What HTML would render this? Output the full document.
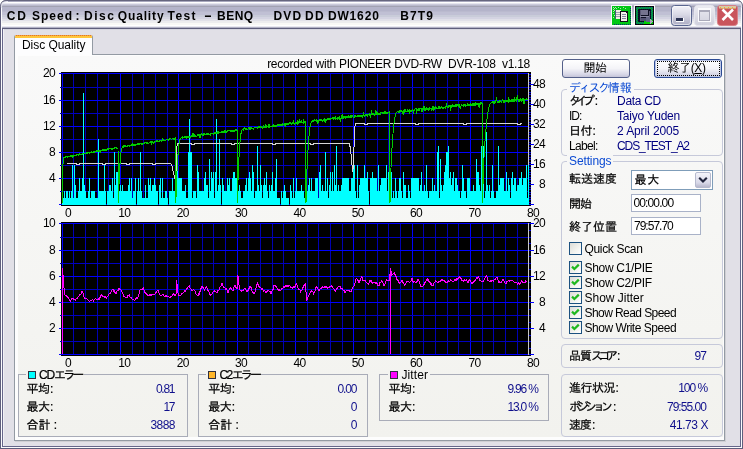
<!DOCTYPE html>
<html lang="ja">
<head>
<meta charset="utf-8">
<title>CD Speed : Disc Quality Test</title>
<style>
html,body{margin:0;padding:0;}
body{width:743px;height:449px;position:relative;overflow:hidden;background:#fff;
 font-family:"Liberation Sans","IPAGothic","Noto Sans CJK JP",sans-serif;font-size:12px;color:#000;}
.abs,#win *{position:absolute;box-sizing:border-box;}
#win{will-change:transform;position:absolute;left:0;top:0;width:743px;height:449px;background:#e1e0e7;overflow:hidden;}
#titlebar{left:0;top:0;width:743px;height:30px;
 background:linear-gradient(to bottom,
 #66667f 0px,#66667f 1px,
 #a8a8be 1px,#a8a8be 2px,
 #ffffff 2px,#ffffff 3px,
 #e6e6ef 3px,#e6e6ef 4px,
 #cacada 4px,#cacada 5px,
 #b9b9cd 5px,#b9b9cd 6px,
 #a2a2b2 6px,#a2a2b2 7px,
 #b4b4ca 7px,#b4b4ca 11px,
 #babace 11px,#babace 12px,
 #c0c0d4 12px,#c0c0d4 15px,
 #c9ccd9 15px,#c9ccd9 17px,
 #d4d4e2 17px,#d4d4e2 19px,
 #e0e0e8 19px,#e0e0e8 21px,
 #ececee 21px,#ececee 23px,
 #f8f8f6 23px,#f8f8f6 25px,
 #ffffff 25px,#ffffff 26px,
 #e8e8f0 26px,#e8e8f0 27px,
 #b0b0c4 27px,#b0b0c4 28px,
 #5e5e7c 28px,#5e5e7c 29px,
 #d4d4de 29px,#d4d4de 30px);}
#title{left:7px;top:6px;width:500px;height:20px;line-height:20px;font-weight:bold;font-size:12px;letter-spacing:0.9px;white-space:pre;color:#000;}
.fr{background:#5e5e7c;}
.t{white-space:nowrap;line-height:14px;height:14px;}
.cj{-webkit-text-stroke:0.22px currentColor;}
.ax{font-size:12px;letter-spacing:-0.7px;line-height:12px;height:12px;white-space:nowrap;}
.axr{text-align:right;width:30px;}
.nv{color:#000080;}
.val{color:#10108c;text-align:right;}
.grp{border:1px solid #c6c9da;border-radius:4px;}
.leg{background:#f7f7f5;color:#0b4ad3;padding:0 2px;-webkit-text-stroke:0 !important;}
.sgrp{border:1px solid #a9acb8;}
.btn{border:1px solid #54608a;border-radius:3px;background:linear-gradient(#ffffff,#f4f4f8 50%,#d6d6e6 85%,#c4c4d8);text-align:center;line-height:17px;font-size:12px;}
.edit{border:1px solid #a9b2c8;background:#fff;line-height:16px;padding-left:2px;letter-spacing:-0.6px}
.cb{width:13px;height:13px;border:1px solid #1c5180;background:linear-gradient(135deg,#dcdcd7,#f3f3ef 60%,#ffffff);}
</style>
</head>
<body>
<div id="win">
<div id="titlebar"></div>
<div id="title"><span style="left:-0.3px;top:0;letter-spacing:1.9px">CD </span><span style="left:25.0px;top:0;letter-spacing:1.0px">Speed </span><span style="left:68.5px;top:0;letter-spacing:0.9px">: </span><span style="left:77.0px;top:0;letter-spacing:1.5px">Disc </span><span style="left:110.8px;top:0;letter-spacing:0.85px">Quality </span><span style="left:160.6px;top:0;letter-spacing:1.4px">Test </span><span style="left:196.6px;top:0;letter-spacing:0.9px;transform:scaleX(2.0);transform-origin:0 50%">- </span><span style="left:210.0px;top:0;letter-spacing:0.5px">BENQ   </span><span style="left:266.4px;top:0;letter-spacing:1.2px">DVD </span><span style="left:298.0px;top:0;letter-spacing:1.3px">DD </span><span style="left:320.9px;top:0;letter-spacing:0.85px">DW1620   </span><span style="left:393.2px;top:0;letter-spacing:1.1px">B7T9</span></div>
<div class="fr" style="left:0;top:7px;width:1px;height:442px"></div>
<div style="left:1px;top:7px;width:1px;height:441px;background:#fbfbfd"></div>
<div class="fr" style="left:2px;top:29px;width:1px;height:418px;background:#66668a"></div>
<div style="left:3px;top:29px;width:1px;height:417px;background:#f0f0f5"></div>
<div class="fr" style="left:742px;top:7px;width:1px;height:442px"></div>
<div style="left:741px;top:7px;width:1px;height:441px;background:#fbfbfd"></div>
<div class="fr" style="left:740px;top:29px;width:1px;height:418px;background:#66668a"></div>
<div class="fr" style="left:0;top:448px;width:743px;height:1px"></div>
<div style="left:1px;top:447px;width:741px;height:1px;background:#fbfbfd"></div>
<div class="fr" style="left:2px;top:446px;width:739px;height:1px;background:#66668a"></div>
<svg width="8" height="8" viewBox="0 0 8 8" style="left:0;top:0"><path d="M0 0H7Q0 0 0 7z" fill="#fff"/><path d="M0.5 8V6.5Q0.5 0.5 6.5 0.5H8" fill="none" stroke="#66667f" stroke-width="1"/><path d="M1.5 8V7Q1.5 1.8 7 1.6H8" fill="none" stroke="#e6e6f0" stroke-width="1"/></svg>
<svg width="8" height="8" viewBox="0 0 8 8" style="left:735px;top:0"><g transform="translate(8,0) scale(-1,1)"><path d="M0 0H7Q0 0 0 7z" fill="#fff"/><path d="M0.5 8V6.5Q0.5 0.5 6.5 0.5H8" fill="none" stroke="#66667f" stroke-width="1"/><path d="M1.5 8V7Q1.5 1.8 7 1.6H8" fill="none" stroke="#e6e6f0" stroke-width="1"/></g></svg>

<svg width="140" height="30" viewBox="603 0 140 30" style="left:603px;top:0">
<defs>
<pattern id="chk" width="2" height="2" patternUnits="userSpaceOnUse"><rect width="2" height="2" fill="#0a3c96"/><rect width="1" height="1" fill="#00dc00"/><rect x="1" y="1" width="1" height="1" fill="#00dc00"/></pattern>
<pattern id="dotn" width="2" height="2" patternUnits="userSpaceOnUse"><rect width="2" height="2" fill="#00c814"/><rect width="1" height="1" fill="#0a2878"/></pattern>
<linearGradient id="gmin" x1="0" y1="0" x2="0" y2="1"><stop offset="0" stop-color="#f4f4fa"/><stop offset="0.45" stop-color="#d9d9e6"/><stop offset="1" stop-color="#a9a9c1"/></linearGradient>
<linearGradient id="gmax" x1="0" y1="0" x2="0" y2="1"><stop offset="0" stop-color="#ececf2"/><stop offset="1" stop-color="#cfcfdc"/></linearGradient>
</defs>
<g shape-rendering="crispEdges">
<rect x="611" y="5" width="21" height="21" fill="#fff" opacity="0.9"/>
<rect x="612" y="6" width="19" height="19" fill="#00c814"/>
<rect x="630" y="8" width="1" height="17" fill="url(#dotn)"/>
<rect x="613" y="24" width="18" height="1" fill="url(#dotn)"/>
<rect x="613" y="7" width="1" height="1" fill="#b4dcb4"/>
<rect x="614" y="8" width="1" height="1" fill="#b4dcb4"/>
<rect x="613" y="9" width="1" height="1" fill="#b4dcb4"/>
<rect x="615" y="7" width="1" height="1" fill="#b4dcb4"/>
<rect x="614" y="10" width="1" height="1" fill="#b4dcb4"/>
<rect x="613" y="11" width="1" height="1" fill="#b4dcb4"/>
<rect x="616" y="8" width="1" height="1" fill="#b4dcb4"/>
<rect x="613" y="13" width="1" height="1" fill="#b4dcb4"/>
<rect x="618" y="7" width="1" height="1" fill="#b4dcb4"/>
<rect x="620" y="8" width="1" height="1" fill="#b4dcb4"/>
<rect x="623" y="7" width="1" height="1" fill="#b4dcb4"/>
<rect x="625" y="8" width="1" height="1" fill="#b4dcb4"/>
<rect x="614" y="15" width="1" height="1" fill="#b4dcb4"/>
<rect x="613" y="17" width="1" height="1" fill="#b4dcb4"/>
<rect x="615" y="10" width="6" height="9" fill="#f2f0e0"/>
<rect x="615" y="10" width="1" height="9" fill="#4a5a78"/>
<rect x="616" y="12" width="4" height="1" fill="#9aa0b0"/>
<rect x="616" y="14" width="4" height="1" fill="#9aa0b0"/>
<rect x="616" y="16" width="4" height="1" fill="#9aa0b0"/>
<rect x="620" y="11" width="8" height="11" fill="#101018"/>
<rect x="621" y="12" width="6" height="9" fill="#f4f2ea"/>
<rect x="626" y="12" width="1" height="1" fill="#101018"/>
<rect x="622" y="14" width="4" height="1" fill="#8088a0"/>
<rect x="622" y="16" width="4" height="1" fill="#8088a0"/>
<rect x="622" y="18" width="4" height="1" fill="#8088a0"/>
</g>
<g shape-rendering="crispEdges">
<rect x="634" y="5" width="21" height="21" fill="#fff" opacity="0.9"/>
<rect x="635" y="6" width="19" height="19" fill="#08080c"/>
<rect x="636" y="7" width="17" height="17" fill="url(#chk)"/>
<rect x="638" y="9" width="13" height="13" fill="#0c1024"/>
<rect x="644" y="21" width="9" height="3" fill="#00d000"/>
<rect x="640" y="10" width="1" height="11" fill="#5c5c78"/>
<rect x="641" y="10" width="7" height="5" fill="#74748f"/>
<rect x="640" y="16" width="10" height="1" fill="#8a8aa4"/>
<rect x="649" y="11" width="1" height="9" fill="#5c5c78"/>
<rect x="641" y="18" width="5" height="3" fill="#505070"/>
<rect x="646" y="17" width="4" height="5" fill="#606484"/>
<path d="M650 19 l3 2.5 l-3 2.5z" fill="#a8a8b8"/>
</g>
<rect x="671.5" y="5.5" width="20" height="20" rx="3" fill="url(#gmin)" stroke="#5a6690" stroke-width="1"/>
<rect x="672.5" y="6.5" width="18" height="18" rx="2.5" fill="none" stroke="#ffffff" stroke-opacity="0.55"/>
<rect x="675.5" y="17.5" width="8" height="4" fill="#fff" shape-rendering="crispEdges"/>
<rect x="676" y="18" width="7" height="3" fill="#2c3454" shape-rendering="crispEdges"/>
<rect x="694.5" y="5.5" width="20" height="20" rx="3" fill="url(#gmax)" stroke="#e6e6ee" stroke-width="1"/>
<rect x="699" y="9.5" width="11" height="11.5" fill="none" stroke="#fbfbfd" stroke-width="2.4" shape-rendering="crispEdges"/>
<rect x="699.5" y="10.5" width="10" height="10" fill="none" stroke="#a9a9b9" stroke-width="1" shape-rendering="crispEdges"/>
<rect x="699" y="10" width="11" height="2" fill="#a9a9b9" shape-rendering="crispEdges"/>
<rect x="717.5" y="5.5" width="20" height="20" rx="3" fill="#c9545c" stroke="#d88088" stroke-width="1"/>
<rect x="719" y="6" width="17" height="2.5" fill="#d8c8a4"/>
<path d="M722.5 9.5 L733 20 M733 9.5 L722.5 20" stroke="#fff" stroke-width="2.6" stroke-linecap="butt"/>
<rect x="720" y="7" width="1" height="1" fill="#f0b428"/>
<rect x="722" y="8" width="1" height="1" fill="#f0b428"/>
<rect x="724" y="7" width="1" height="1" fill="#f0b428"/>
<rect x="726" y="8" width="1" height="1" fill="#f0b428"/>
<rect x="728" y="7" width="1" height="1" fill="#f0b428"/>
<rect x="730" y="8" width="1" height="1" fill="#f0b428"/>
<rect x="732" y="7" width="1" height="1" fill="#f0b428"/>
<rect x="734" y="8" width="1" height="1" fill="#f0b428"/>
</svg>
<div id="panel" style="left:14px;top:54px;width:711px;height:387px;border:1px solid #939aa3;background:#fdfdfd;box-shadow:1px 1px 0 #cfcfd3"></div>
<div id="page" style="left:18px;top:56px;width:705px;height:381px;background:linear-gradient(to bottom,#f9f9f9 0%,#f6f6f4 45%,#f2f2ee 100%)"></div>
<div id="tabhead" style="left:14px;top:35px;width:79px;height:20px;background:#fdfdfe;border-left:1px solid #939aa3;border-right:1px solid #939aa3;border-radius:2px 2px 0 0;overflow:hidden">
 <div style="left:-1px;top:0;width:79px;height:1px;background:repeating-linear-gradient(to right,#e2772a 0,#e2772a 1px,#f6a73a 1px,#f6a73a 2px)"></div>
 <div style="left:-1px;top:1px;width:79px;height:2px;background:#ffc73c"></div>
</div>
<div class="t" style="left:22px;top:38px;font-size:12px;letter-spacing:-0.05px">Disc Quality</div>

<svg id="charts" width="743" height="449" viewBox="0 0 743 449" style="position:absolute;left:0;top:0" shape-rendering="crispEdges">
<rect x="61" y="72" width="470" height="134" fill="#000"/>
<rect x="62" y="73" width="1" height="132" fill="#0000ff"/>
<rect x="73" y="73" width="1" height="132" fill="#0000b4"/>
<rect x="85" y="73" width="1" height="132" fill="#0000b4"/>
<rect x="97" y="73" width="1" height="132" fill="#0000b4"/>
<rect x="108" y="73" width="1" height="132" fill="#0000b4"/>
<rect x="120" y="73" width="1" height="132" fill="#0000ff"/>
<rect x="132" y="73" width="1" height="132" fill="#0000b4"/>
<rect x="143" y="73" width="1" height="132" fill="#0000b4"/>
<rect x="155" y="73" width="1" height="132" fill="#0000b4"/>
<rect x="167" y="73" width="1" height="132" fill="#0000b4"/>
<rect x="178" y="73" width="1" height="132" fill="#0000ff"/>
<rect x="190" y="73" width="1" height="132" fill="#0000b4"/>
<rect x="202" y="73" width="1" height="132" fill="#0000b4"/>
<rect x="213" y="73" width="1" height="132" fill="#0000b4"/>
<rect x="225" y="73" width="1" height="132" fill="#0000b4"/>
<rect x="237" y="73" width="1" height="132" fill="#0000ff"/>
<rect x="248" y="73" width="1" height="132" fill="#0000b4"/>
<rect x="260" y="73" width="1" height="132" fill="#0000b4"/>
<rect x="272" y="73" width="1" height="132" fill="#0000b4"/>
<rect x="283" y="73" width="1" height="132" fill="#0000b4"/>
<rect x="295" y="73" width="1" height="132" fill="#0000ff"/>
<rect x="307" y="73" width="1" height="132" fill="#0000b4"/>
<rect x="318" y="73" width="1" height="132" fill="#0000b4"/>
<rect x="330" y="73" width="1" height="132" fill="#0000b4"/>
<rect x="342" y="73" width="1" height="132" fill="#0000b4"/>
<rect x="353" y="73" width="1" height="132" fill="#0000ff"/>
<rect x="365" y="73" width="1" height="132" fill="#0000b4"/>
<rect x="377" y="73" width="1" height="132" fill="#0000b4"/>
<rect x="388" y="73" width="1" height="132" fill="#0000b4"/>
<rect x="400" y="73" width="1" height="132" fill="#0000b4"/>
<rect x="412" y="73" width="1" height="132" fill="#0000ff"/>
<rect x="423" y="73" width="1" height="132" fill="#0000b4"/>
<rect x="435" y="73" width="1" height="132" fill="#0000b4"/>
<rect x="447" y="73" width="1" height="132" fill="#0000b4"/>
<rect x="458" y="73" width="1" height="132" fill="#0000b4"/>
<rect x="470" y="73" width="1" height="132" fill="#0000ff"/>
<rect x="482" y="73" width="1" height="132" fill="#0000b4"/>
<rect x="493" y="73" width="1" height="132" fill="#0000b4"/>
<rect x="505" y="73" width="1" height="132" fill="#0000b4"/>
<rect x="517" y="73" width="1" height="132" fill="#0000b4"/>
<rect x="59" y="204" width="470" height="1" fill="#0000ff"/>
<rect x="60" y="191" width="469" height="1" fill="#0000c0"/>
<rect x="59" y="178" width="470" height="1" fill="#0000ff"/>
<rect x="60" y="165" width="469" height="1" fill="#0000c0"/>
<rect x="59" y="152" width="470" height="1" fill="#0000ff"/>
<rect x="60" y="139" width="469" height="1" fill="#0000c0"/>
<rect x="59" y="126" width="470" height="1" fill="#0000ff"/>
<rect x="60" y="113" width="469" height="1" fill="#0000c0"/>
<rect x="59" y="100" width="470" height="1" fill="#0000ff"/>
<rect x="60" y="87" width="469" height="1" fill="#0000c0"/>
<rect x="59" y="73" width="470" height="1" fill="#0000ff"/>
<rect x="528" y="73" width="1" height="132" fill="#c8c8c8"/>
<rect x="529" y="204" width="5" height="1" fill="#0000ff"/>
<rect x="529" y="202" width="2" height="1" fill="#0000e0"/>
<rect x="529" y="199" width="2" height="1" fill="#0000e0"/>
<rect x="529" y="197" width="2" height="1" fill="#0000e0"/>
<rect x="529" y="194" width="2" height="1" fill="#0000e0"/>
<rect x="529" y="192" width="2" height="1" fill="#0000e0"/>
<rect x="529" y="189" width="2" height="1" fill="#0000e0"/>
<rect x="529" y="187" width="2" height="1" fill="#0000e0"/>
<rect x="529" y="184" width="5" height="1" fill="#0000ff"/>
<rect x="529" y="182" width="2" height="1" fill="#0000e0"/>
<rect x="529" y="179" width="2" height="1" fill="#0000e0"/>
<rect x="529" y="177" width="2" height="1" fill="#0000e0"/>
<rect x="529" y="174" width="2" height="1" fill="#0000e0"/>
<rect x="529" y="172" width="2" height="1" fill="#0000e0"/>
<rect x="529" y="169" width="2" height="1" fill="#0000e0"/>
<rect x="529" y="167" width="2" height="1" fill="#0000e0"/>
<rect x="529" y="164" width="5" height="1" fill="#0000ff"/>
<rect x="529" y="162" width="2" height="1" fill="#0000e0"/>
<rect x="529" y="159" width="2" height="1" fill="#0000e0"/>
<rect x="529" y="157" width="2" height="1" fill="#0000e0"/>
<rect x="529" y="154" width="2" height="1" fill="#0000e0"/>
<rect x="529" y="152" width="2" height="1" fill="#0000e0"/>
<rect x="529" y="149" width="2" height="1" fill="#0000e0"/>
<rect x="529" y="147" width="2" height="1" fill="#0000e0"/>
<rect x="529" y="144" width="5" height="1" fill="#0000ff"/>
<rect x="529" y="142" width="2" height="1" fill="#0000e0"/>
<rect x="529" y="139" width="2" height="1" fill="#0000e0"/>
<rect x="529" y="137" width="2" height="1" fill="#0000e0"/>
<rect x="529" y="134" width="2" height="1" fill="#0000e0"/>
<rect x="529" y="132" width="2" height="1" fill="#0000e0"/>
<rect x="529" y="129" width="2" height="1" fill="#0000e0"/>
<rect x="529" y="127" width="2" height="1" fill="#0000e0"/>
<rect x="529" y="124" width="5" height="1" fill="#0000ff"/>
<rect x="529" y="122" width="2" height="1" fill="#0000e0"/>
<rect x="529" y="119" width="2" height="1" fill="#0000e0"/>
<rect x="529" y="117" width="2" height="1" fill="#0000e0"/>
<rect x="529" y="114" width="2" height="1" fill="#0000e0"/>
<rect x="529" y="112" width="2" height="1" fill="#0000e0"/>
<rect x="529" y="109" width="2" height="1" fill="#0000e0"/>
<rect x="529" y="107" width="2" height="1" fill="#0000e0"/>
<rect x="529" y="104" width="5" height="1" fill="#0000ff"/>
<rect x="529" y="102" width="2" height="1" fill="#0000e0"/>
<rect x="529" y="99" width="2" height="1" fill="#0000e0"/>
<rect x="529" y="97" width="2" height="1" fill="#0000e0"/>
<rect x="529" y="94" width="2" height="1" fill="#0000e0"/>
<rect x="529" y="92" width="2" height="1" fill="#0000e0"/>
<rect x="529" y="89" width="2" height="1" fill="#0000e0"/>
<rect x="529" y="87" width="2" height="1" fill="#0000e0"/>
<rect x="529" y="84" width="5" height="1" fill="#0000ff"/>
<rect x="529" y="82" width="2" height="1" fill="#0000e0"/>
<rect x="529" y="79" width="2" height="1" fill="#0000e0"/>
<rect x="529" y="77" width="2" height="1" fill="#0000e0"/>
<rect x="529" y="74" width="2" height="1" fill="#0000e0"/>
<path d="M62 191h1V205h-1zM63 198h1V205h-1zM64 191h1V205h-1zM65 198h1V205h-1zM66 191h1V205h-1zM67 191h1V205h-1zM68 198h1V205h-1zM69 191h1V205h-1zM70 198h1V205h-1zM71 191h1V205h-1zM72 165h1V205h-1zM73 198h1V205h-1zM74 165h1V205h-1zM75 185h1V205h-1zM76 198h1V205h-1zM77 198h1V205h-1zM78 191h1V205h-1zM79 178h1V205h-1zM80 191h1V205h-1zM81 191h1V205h-1zM82 178h1V205h-1zM83 93h1V205h-1zM84 185h1V205h-1zM85 191h1V205h-1zM86 198h1V205h-1zM87 198h1V205h-1zM88 191h1V205h-1zM89 178h1V205h-1zM90 198h1V205h-1zM91 191h1V205h-1zM92 191h1V205h-1zM93 191h1V205h-1zM94 191h1V205h-1zM95 198h1V205h-1zM96 198h1V205h-1zM97 198h1V205h-1zM98 139h1V205h-1zM99 191h1V205h-1zM100 191h1V205h-1zM101 191h1V205h-1zM102 191h1V205h-1zM103 191h1V205h-1zM104 165h1V205h-1zM105 191h1V205h-1zM107 191h1V205h-1zM108 191h1V205h-1zM109 185h1V205h-1zM110 185h1V205h-1zM111 191h1V205h-1zM112 178h1V205h-1zM113 198h1V205h-1zM114 152h1V205h-1zM115 185h1V205h-1zM116 172h1V205h-1zM117 172h1V205h-1zM118 198h1V205h-1zM119 191h1V205h-1zM120 185h1V205h-1zM121 191h1V205h-1zM122 185h1V205h-1zM123 191h1V205h-1zM124 191h1V205h-1zM125 191h1V205h-1zM126 191h1V205h-1zM127 191h1V205h-1zM128 185h1V205h-1zM129 178h1V205h-1zM130 191h1V205h-1zM131 178h1V205h-1zM132 198h1V205h-1zM133 191h1V205h-1zM134 191h1V205h-1zM135 178h1V205h-1zM137 191h1V205h-1zM138 178h1V205h-1zM139 191h1V205h-1zM140 152h1V205h-1zM141 191h1V205h-1zM142 198h1V205h-1zM143 198h1V205h-1zM144 198h1V205h-1zM145 185h1V205h-1zM146 198h1V205h-1zM147 198h1V205h-1zM148 178h1V205h-1zM149 185h1V205h-1zM150 178h1V205h-1zM151 191h1V205h-1zM152 185h1V205h-1zM153 185h1V205h-1zM154 178h1V205h-1zM155 185h1V205h-1zM156 191h1V205h-1zM157 191h1V205h-1zM159 185h1V205h-1zM160 178h1V205h-1zM161 198h1V205h-1zM162 178h1V205h-1zM163 198h1V205h-1zM164 198h1V205h-1zM165 191h1V205h-1zM166 191h1V205h-1zM167 198h1V205h-1zM169 191h1V205h-1zM170 191h1V205h-1zM171 191h1V205h-1zM172 178h1V205h-1zM173 191h1V205h-1zM174 191h1V205h-1zM175 152h1V205h-1zM176 152h1V205h-1zM177 165h1V205h-1zM178 178h1V205h-1zM179 178h1V205h-1zM180 178h1V205h-1zM181 178h1V205h-1zM182 191h1V205h-1zM183 191h1V205h-1zM184 191h1V205h-1zM185 185h1V205h-1zM186 198h1V205h-1zM187 198h1V205h-1zM188 152h1V205h-1zM189 119h1V205h-1zM190 152h1V205h-1zM191 152h1V205h-1zM192 198h1V205h-1zM193 191h1V205h-1zM194 191h1V205h-1zM195 191h1V205h-1zM196 198h1V205h-1zM197 165h1V205h-1zM198 172h1V205h-1zM199 191h1V205h-1zM200 191h1V205h-1zM201 191h1V205h-1zM202 191h1V205h-1zM203 191h1V205h-1zM204 178h1V205h-1zM205 172h1V205h-1zM206 185h1V205h-1zM207 185h1V205h-1zM208 198h1V205h-1zM209 159h1V205h-1zM210 191h1V205h-1zM211 172h1V205h-1zM212 178h1V205h-1zM213 172h1V205h-1zM214 198h1V205h-1zM215 172h1V205h-1zM216 119h1V205h-1zM217 191h1V205h-1zM218 185h1V205h-1zM219 139h1V205h-1zM220 185h1V205h-1zM222 178h1V205h-1zM223 185h1V205h-1zM224 191h1V205h-1zM225 191h1V205h-1zM226 191h1V205h-1zM227 178h1V205h-1zM228 185h1V205h-1zM229 178h1V205h-1zM230 191h1V205h-1zM231 191h1V205h-1zM232 178h1V205h-1zM233 172h1V205h-1zM234 172h1V205h-1zM235 178h1V205h-1zM236 178h1V205h-1zM237 159h1V205h-1zM238 191h1V205h-1zM239 185h1V205h-1zM240 191h1V205h-1zM241 198h1V205h-1zM242 198h1V205h-1zM243 191h1V205h-1zM244 191h1V205h-1zM245 185h1V205h-1zM246 178h1V205h-1zM247 191h1V205h-1zM248 178h1V205h-1zM249 172h1V205h-1zM250 178h1V205h-1zM251 191h1V205h-1zM252 165h1V205h-1zM253 172h1V205h-1zM254 198h1V205h-1zM255 191h1V205h-1zM256 191h1V205h-1zM257 146h1V205h-1zM258 185h1V205h-1zM259 191h1V205h-1zM260 165h1V205h-1zM261 185h1V205h-1zM262 198h1V205h-1zM263 185h1V205h-1zM264 178h1V205h-1zM265 185h1V205h-1zM266 172h1V205h-1zM267 191h1V205h-1zM268 198h1V205h-1zM269 185h1V205h-1zM270 191h1V205h-1zM271 185h1V205h-1zM272 172h1V205h-1zM273 191h1V205h-1zM274 191h1V205h-1zM275 178h1V205h-1zM276 159h1V205h-1zM277 198h1V205h-1zM278 198h1V205h-1zM279 198h1V205h-1zM281 191h1V205h-1zM282 198h1V205h-1zM283 191h1V205h-1zM284 185h1V205h-1zM285 191h1V205h-1zM286 198h1V205h-1zM287 198h1V205h-1zM288 198h1V205h-1zM290 185h1V205h-1zM291 191h1V205h-1zM292 198h1V205h-1zM293 178h1V205h-1zM294 198h1V205h-1zM295 191h1V205h-1zM296 178h1V205h-1zM297 191h1V205h-1zM298 191h1V205h-1zM299 191h1V205h-1zM300 191h1V205h-1zM301 185h1V205h-1zM302 191h1V205h-1zM303 191h1V205h-1zM304 198h1V205h-1zM305 178h1V205h-1zM306 191h1V205h-1zM307 191h1V205h-1zM308 185h1V205h-1zM309 178h1V205h-1zM310 191h1V205h-1zM311 178h1V205h-1zM312 191h1V205h-1zM313 191h1V205h-1zM314 191h1V205h-1zM315 178h1V205h-1zM316 178h1V205h-1zM317 178h1V205h-1zM318 198h1V205h-1zM319 172h1V205h-1zM320 165h1V205h-1zM321 191h1V205h-1zM322 185h1V205h-1zM323 191h1V205h-1zM324 191h1V205h-1zM325 152h1V205h-1zM326 191h1V205h-1zM327 178h1V205h-1zM328 198h1V205h-1zM329 185h1V205h-1zM330 172h1V205h-1zM331 191h1V205h-1zM332 172h1V205h-1zM333 191h1V205h-1zM334 165h1V205h-1zM335 185h1V205h-1zM336 146h1V205h-1zM337 191h1V205h-1zM338 185h1V205h-1zM339 191h1V205h-1zM340 191h1V205h-1zM341 185h1V205h-1zM342 178h1V205h-1zM343 178h1V205h-1zM344 178h1V205h-1zM345 178h1V205h-1zM346 178h1V205h-1zM347 178h1V205h-1zM348 178h1V205h-1zM349 191h1V205h-1zM350 191h1V205h-1zM351 178h1V205h-1zM352 178h1V205h-1zM353 165h1V205h-1zM354 165h1V205h-1zM355 191h1V205h-1zM356 198h1V205h-1zM357 165h1V205h-1zM358 198h1V205h-1zM359 185h1V205h-1zM360 178h1V205h-1zM361 178h1V205h-1zM362 178h1V205h-1zM363 178h1V205h-1zM364 165h1V205h-1zM365 178h1V205h-1zM366 178h1V205h-1zM367 172h1V205h-1zM368 191h1V205h-1zM370 178h1V205h-1zM371 178h1V205h-1zM372 172h1V205h-1zM373 178h1V205h-1zM374 178h1V205h-1zM375 178h1V205h-1zM376 178h1V205h-1zM377 191h1V205h-1zM378 165h1V205h-1zM379 191h1V205h-1zM380 185h1V205h-1zM381 178h1V205h-1zM382 178h1V205h-1zM383 178h1V205h-1zM384 178h1V205h-1zM385 178h1V205h-1zM386 165h1V205h-1zM387 191h1V205h-1zM388 172h1V205h-1zM389 172h1V205h-1zM390 178h1V205h-1zM391 172h1V205h-1zM392 198h1V205h-1zM393 191h1V205h-1zM394 198h1V205h-1zM395 178h1V205h-1zM396 191h1V205h-1zM397 198h1V205h-1zM398 191h1V205h-1zM399 178h1V205h-1zM400 178h1V205h-1zM401 191h1V205h-1zM402 198h1V205h-1zM403 172h1V205h-1zM404 185h1V205h-1zM405 185h1V205h-1zM406 198h1V205h-1zM407 198h1V205h-1zM408 185h1V205h-1zM409 191h1V205h-1zM410 198h1V205h-1zM411 178h1V205h-1zM412 178h1V205h-1zM413 178h1V205h-1zM414 178h1V205h-1zM415 178h1V205h-1zM416 178h1V205h-1zM417 178h1V205h-1zM418 178h1V205h-1zM419 191h1V205h-1zM420 185h1V205h-1zM421 172h1V205h-1zM422 191h1V205h-1zM423 191h1V205h-1zM424 185h1V205h-1zM425 191h1V205h-1zM426 165h1V205h-1zM427 191h1V205h-1zM428 198h1V205h-1zM429 191h1V205h-1zM430 191h1V205h-1zM431 191h1V205h-1zM432 178h1V205h-1zM433 191h1V205h-1zM434 185h1V205h-1zM435 191h1V205h-1zM436 191h1V205h-1zM437 152h1V205h-1zM438 146h1V205h-1zM439 198h1V205h-1zM440 159h1V205h-1zM441 185h1V205h-1zM442 191h1V205h-1zM443 185h1V205h-1zM444 172h1V205h-1zM445 165h1V205h-1zM446 152h1V205h-1zM447 152h1V205h-1zM448 146h1V205h-1zM449 178h1V205h-1zM450 172h1V205h-1zM451 185h1V205h-1zM452 178h1V205h-1zM453 172h1V205h-1zM454 191h1V205h-1zM455 178h1V205h-1zM456 178h1V205h-1zM457 185h1V205h-1zM458 191h1V205h-1zM459 191h1V205h-1zM460 198h1V205h-1zM461 191h1V205h-1zM462 165h1V205h-1zM463 178h1V205h-1zM464 191h1V205h-1zM465 191h1V205h-1zM466 198h1V205h-1zM467 178h1V205h-1zM468 178h1V205h-1zM469 178h1V205h-1zM470 191h1V205h-1zM471 191h1V205h-1zM472 191h1V205h-1zM473 185h1V205h-1zM474 191h1V205h-1zM475 191h1V205h-1zM476 159h1V205h-1zM477 172h1V205h-1zM478 172h1V205h-1zM479 185h1V205h-1zM480 191h1V205h-1zM481 146h1V205h-1zM482 146h1V205h-1zM483 146h1V205h-1zM484 198h1V205h-1zM485 191h1V205h-1zM486 132h1V205h-1zM487 185h1V205h-1zM488 191h1V205h-1zM489 185h1V205h-1zM490 198h1V205h-1zM491 191h1V205h-1zM492 165h1V205h-1zM493 191h1V205h-1zM494 198h1V205h-1zM495 198h1V205h-1zM496 191h1V205h-1zM497 191h1V205h-1zM498 146h1V205h-1zM499 185h1V205h-1zM500 178h1V205h-1zM501 178h1V205h-1zM502 178h1V205h-1zM503 178h1V205h-1zM504 191h1V205h-1zM505 191h1V205h-1zM506 172h1V205h-1zM507 191h1V205h-1zM508 178h1V205h-1zM509 185h1V205h-1zM510 198h1V205h-1zM511 178h1V205h-1zM512 172h1V205h-1zM513 185h1V205h-1zM514 178h1V205h-1zM515 178h1V205h-1zM516 191h1V205h-1zM517 185h1V205h-1zM518 185h1V205h-1zM519 178h1V205h-1zM520 178h1V205h-1zM521 172h1V205h-1zM522 185h1V205h-1zM523 178h1V205h-1zM524 178h1V205h-1zM525 178h1V205h-1zM526 165h1V205h-1zM527 198h1V205h-1zM528 165h1V205h-1z" fill="#00ffff"/>
<rect x="61" y="205" width="470" height="1" fill="#000"/>
<g shape-rendering="crispEdges"><polyline points="66.5,163.5 76.0,163.5 77.0,164.5 79.0,164.5 80.0,163.5 102.0,163.5 103.0,164.5 105.0,164.5 106.0,163.5 126.0,163.5 127.0,164.5 129.0,164.5 130.0,163.5 152.0,163.5 153.0,164.5 155.0,164.5 156.0,163.5 170.5,163.5 172.0,166.0 174.0,175.0 175.5,181.0 176.5,170.0 177.0,146.0 178.0,143.5 191.0,143.5 192.0,144.5 194.0,144.5 195.0,143.5 231.0,143.5 232.0,144.5 234.0,144.5 235.0,143.5 272.0,143.5 273.0,144.5 275.0,144.5 276.0,143.5 310.0,143.5 311.0,144.5 313.0,144.5 314.0,143.5 349.0,143.5 350.5,148.0 351.5,160.0 352.8,171.5 353.8,160.0 354.3,130.0 355.5,123.5 364.0,123.5 365.0,124.5 367.0,124.5 368.0,123.5 415.0,123.5 416.0,124.5 418.0,124.5 419.0,123.5 463.0,123.5 464.0,124.5 466.0,124.5 467.0,123.5 517.0,123.5 518.0,124.5 520.0,124.5 521.0,123.5 521.5,123.5" fill="none" stroke="#d6d6d6" stroke-width="1"/><polyline points="62.5,203.0 62.5,170.0 63.5,159.0 64.0,157.4 64.3,157.9 64.7,157.6 65.0,157.6 65.4,156.7 65.7,157.6 66.0,157.2 66.4,156.6 66.7,156.8 67.1,156.7 67.4,156.6 67.7,157.4 68.1,156.6 68.4,156.9 68.8,156.8 69.1,156.1 69.4,156.2 69.8,156.2 70.1,155.8 70.5,156.0 70.8,156.5 71.1,155.9 71.5,156.1 71.8,155.6 72.2,155.6 72.5,157.7 72.8,155.3 73.2,156.4 73.5,155.6 73.9,156.2 74.2,155.1 74.5,155.2 74.9,155.6 75.2,155.1 75.6,155.1 75.9,155.7 76.2,154.7 76.6,155.3 76.9,155.3 77.3,154.8 77.6,154.7 77.9,154.6 78.3,155.3 78.6,154.1 79.0,154.3 79.3,154.4 79.6,154.0 80.0,154.8 80.3,154.1 80.7,154.5 81.0,153.8 81.3,154.1 81.7,154.5 82.0,155.3 82.4,154.5 82.7,154.0 83.0,153.3 83.4,153.7 83.7,153.9 84.1,153.1 84.4,153.1 84.7,153.3 85.1,153.8 85.4,153.1 85.8,153.1 86.1,153.1 86.4,152.8 86.8,153.7 87.1,152.7 87.5,153.7 87.8,152.5 88.1,152.4 88.5,152.3 88.8,152.5 89.2,153.2 89.5,152.5 89.8,152.6 90.2,152.3 90.5,152.2 90.9,151.9 91.2,152.5 91.5,151.9 91.9,151.9 92.2,152.1 92.6,152.6 92.9,152.7 93.2,152.6 93.6,151.3 93.9,152.4 94.3,151.7 94.6,152.1 94.9,151.2 95.3,151.1 95.6,151.8 96.0,152.0 96.3,150.4 96.6,151.0 97.0,151.5 97.3,150.7 97.7,151.3 98.0,150.6 98.3,151.1 98.7,150.8 99.0,152.4 99.4,151.5 99.7,150.5 100.0,150.4 100.4,152.1 100.7,150.9 101.1,149.9 101.4,150.7 101.7,150.1 102.1,151.0 102.4,149.7 102.8,150.1 103.1,149.8 103.4,150.5 103.8,149.7 104.1,149.8 104.5,149.6 104.8,150.3 105.1,150.5 105.5,149.3 105.8,149.6 106.2,150.3 106.5,149.4 106.8,150.2 107.2,148.9 107.5,149.3 107.9,149.9 108.2,150.0 108.5,149.0 108.9,149.8 109.2,148.5 109.6,148.9 109.9,148.8 110.2,148.2 110.6,148.7 110.9,148.3 111.3,148.4 111.6,149.2 111.9,150.0 112.3,148.2 112.6,148.5 113.0,148.8 113.3,148.6 113.6,148.5 114.0,148.1 114.3,148.7 114.7,147.8 115.0,148.3 115.3,147.8 115.7,147.4 116.0,148.2 116.4,147.6 116.7,148.0 117.0,148.4 117.4,148.2 117.7,148.0 118.0,148.0 118.3,202.5 119.3,176.3 119.8,166.7 120.3,159.3 120.8,153.9 121.3,150.3 121.8,148.1 122.3,147.1 122.8,146.8 123.1,147.4 123.5,146.2 123.8,145.9 124.2,146.3 124.5,146.0 124.8,147.0 125.2,146.8 125.5,146.4 125.9,145.8 126.2,146.5 126.5,146.3 126.9,146.0 127.2,145.5 127.6,145.6 127.9,146.7 128.2,145.4 128.6,145.8 128.9,145.4 129.3,146.2 129.6,146.1 129.9,145.3 130.3,145.2 130.6,145.4 131.0,145.1 131.3,146.0 131.6,144.7 132.0,144.9 132.3,145.5 132.7,143.6 133.0,145.1 133.3,145.6 133.7,144.3 134.0,144.4 134.4,145.6 134.7,145.5 135.0,145.4 135.4,144.4 135.7,145.4 136.1,144.8 136.4,144.2 136.7,144.0 137.1,144.1 137.4,144.7 137.8,143.6 138.1,144.6 138.4,144.0 138.8,144.7 139.1,143.5 139.5,143.9 139.8,144.3 140.1,143.5 140.5,143.8 140.8,143.6 141.2,143.6 141.5,143.6 141.8,144.3 142.2,143.5 142.5,144.0 142.9,142.8 143.2,143.4 143.5,143.3 143.9,143.3 144.2,142.6 144.6,143.5 144.9,142.6 145.2,143.0 145.6,142.6 145.9,143.1 146.3,142.4 146.6,143.5 146.9,142.5 147.3,143.6 147.6,142.8 148.0,143.4 148.3,143.4 148.6,143.2 149.0,143.1 149.3,142.4 149.7,143.0 150.0,142.0 150.3,142.4 150.7,141.8 151.0,142.7 151.4,141.5 151.7,144.2 152.0,141.5 152.4,142.2 152.7,141.7 153.1,142.1 153.4,142.2 153.7,143.4 154.1,141.8 154.4,142.0 154.8,142.3 155.1,141.5 155.4,141.4 155.8,142.1 156.1,140.1 156.5,140.8 156.8,141.9 157.1,140.6 157.5,141.1 157.8,140.7 158.2,142.0 158.5,141.7 158.8,141.9 159.2,141.8 159.5,140.5 159.9,141.6 160.2,140.7 160.5,140.3 160.9,140.4 161.2,140.2 161.6,141.4 161.9,140.3 162.2,138.6 162.6,140.4 162.9,140.1 163.3,140.2 163.6,140.0 163.9,139.6 164.3,141.0 164.6,140.3 165.0,140.8 165.3,140.2 165.6,140.5 166.0,139.8 166.3,139.4 166.7,139.2 167.0,140.1 167.3,139.5 167.7,139.5 168.0,140.3 168.4,140.3 168.7,140.0 169.0,139.2 169.4,139.4 169.7,138.7 170.1,137.9 170.4,138.5 170.7,138.7 171.1,138.8 171.4,139.4 171.8,139.4 172.1,138.5 172.4,138.6 172.8,138.4 173.1,139.6 173.5,138.8 173.8,138.1 174.1,138.9 174.5,139.0 174.8,139.5 175.2,138.3 175.5,137.9 175.8,202.5 176.8,174.7 177.3,165.1 177.8,157.2 178.3,150.9 178.8,146.0 179.3,142.5 179.8,140.1 180.3,138.7 180.8,138.0 181.3,137.8 181.6,137.6 182.0,136.9 182.3,136.8 182.7,138.4 183.0,137.0 183.3,137.5 183.7,138.0 184.0,137.1 184.4,136.6 184.7,137.8 185.0,136.4 185.4,137.6 185.7,137.6 186.1,136.6 186.4,138.4 186.7,137.7 187.1,137.7 187.4,136.1 187.8,137.2 188.1,137.5 188.4,136.4 188.8,137.4 189.1,136.7 189.5,137.3 189.8,136.1 190.1,137.3 190.5,136.3 190.8,136.2 191.2,137.1 191.5,136.9 191.8,136.2 192.2,133.6 192.5,136.3 192.9,135.6 193.2,135.4 193.5,133.6 193.9,136.2 194.2,136.8 194.6,135.1 194.9,134.3 195.2,136.2 195.6,135.9 195.9,136.3 196.3,136.4 196.6,136.3 196.9,136.4 197.3,135.0 197.6,134.7 198.0,136.0 198.3,136.0 198.6,135.0 199.0,134.6 199.3,134.7 199.7,136.9 200.0,137.8 200.3,135.8 200.7,135.2 201.0,134.6 201.4,133.6 201.7,134.6 202.0,134.9 202.4,135.5 202.7,135.4 203.1,133.8 203.4,135.2 203.7,133.7 204.1,134.6 204.4,134.0 204.8,134.2 205.1,134.0 205.4,134.0 205.8,134.7 206.1,133.6 206.5,133.5 206.8,134.6 207.1,134.4 207.5,133.9 207.8,134.8 208.2,132.9 208.5,133.6 208.8,134.0 209.2,134.8 209.5,134.7 209.9,134.0 210.2,135.8 210.5,133.7 210.9,133.6 211.2,133.3 211.6,133.9 211.9,133.0 212.2,133.7 212.6,133.4 212.9,133.9 213.3,133.6 213.6,134.2 213.9,133.4 214.3,132.7 214.6,132.7 215.0,134.0 215.3,133.4 215.6,132.4 216.0,132.6 216.3,132.5 216.7,133.6 217.0,133.6 217.3,131.9 217.7,132.6 218.0,133.6 218.4,131.8 218.7,131.1 219.0,133.3 219.4,132.7 219.7,132.3 220.1,132.8 220.4,132.9 220.7,133.0 221.1,132.6 221.4,131.9 221.8,131.4 222.1,132.7 222.4,132.4 222.8,131.9 223.1,132.3 223.5,132.3 223.8,131.3 224.1,132.4 224.5,131.8 224.8,130.9 225.2,131.1 225.5,132.5 225.8,130.9 226.2,131.7 226.5,131.6 226.9,132.2 227.2,131.3 227.5,130.9 227.9,131.2 228.2,130.6 228.6,131.0 228.9,130.8 229.2,130.3 229.6,131.0 229.9,130.8 230.3,130.6 230.6,131.9 230.9,130.5 231.3,130.7 231.6,130.2 232.0,131.5 232.3,130.8 232.6,130.2 233.0,130.4 233.3,131.3 233.7,130.6 234.0,130.7 234.3,131.2 234.7,131.2 235.0,130.2 235.4,130.3 235.7,129.4 236.0,129.9 236.4,129.9 236.7,130.1 237.0,130.5 237.3,202.5 238.3,171.1 238.8,160.2 239.3,151.3 239.8,144.2 240.3,138.7 240.8,134.7 241.3,132.0 241.8,130.4 242.3,129.7 242.8,129.5 243.1,130.3 243.5,128.5 243.8,130.1 244.2,128.6 244.5,127.4 244.8,128.6 245.2,128.7 245.5,129.3 245.9,128.4 246.2,129.6 246.5,128.8 246.9,129.2 247.2,129.8 247.6,129.7 247.9,129.1 248.2,128.8 248.6,127.9 248.9,129.0 249.3,127.9 249.6,129.3 249.9,128.7 250.3,129.3 250.6,128.0 251.0,128.6 251.3,127.7 251.6,128.7 252.0,127.9 252.3,128.1 252.7,128.6 253.0,127.9 253.3,129.3 253.7,128.7 254.0,128.0 254.4,127.3 254.7,127.8 255.0,127.1 255.4,127.5 255.7,127.9 256.1,127.3 256.4,127.2 256.7,127.3 257.1,127.6 257.4,128.6 257.8,127.3 258.1,127.5 258.4,126.9 258.8,126.7 259.1,126.6 259.5,127.2 259.8,127.1 260.1,127.1 260.5,126.3 260.8,127.1 261.2,126.2 261.5,127.2 261.8,126.3 262.2,127.4 262.5,128.3 262.9,127.2 263.2,127.2 263.5,126.7 263.9,125.6 264.2,127.4 264.6,126.2 264.9,126.5 265.2,126.5 265.6,127.5 265.9,124.5 266.3,127.1 266.6,126.9 266.9,125.5 267.3,126.6 267.6,126.7 268.0,126.9 268.3,125.4 268.6,127.1 269.0,123.9 269.3,127.2 269.7,125.5 270.0,126.0 270.3,126.2 270.7,126.5 271.0,125.7 271.4,126.3 271.7,126.4 272.0,125.9 272.4,126.1 272.7,126.6 273.1,124.7 273.4,126.5 273.7,125.9 274.1,125.2 274.4,126.5 274.8,125.7 275.1,126.4 275.4,125.3 275.8,126.3 276.1,126.3 276.5,125.9 276.8,125.8 277.1,124.7 277.5,124.8 277.8,125.4 278.2,125.7 278.5,125.8 278.8,124.0 279.2,125.7 279.5,125.9 279.9,124.6 280.2,125.4 280.5,124.7 280.9,124.4 281.2,124.0 281.6,125.2 281.9,124.2 282.2,125.4 282.6,123.8 282.9,125.1 283.3,125.0 283.6,124.5 283.9,124.3 284.3,125.0 284.6,125.3 285.0,123.3 285.3,124.7 285.6,126.6 286.0,124.0 286.3,124.7 286.7,123.5 287.0,124.9 287.3,124.0 287.7,124.1 288.0,123.2 288.4,124.3 288.7,123.9 289.0,123.8 289.4,122.7 289.7,123.4 290.1,123.9 290.4,122.9 290.7,123.2 291.1,124.8 291.4,123.7 291.8,124.4 292.1,122.5 292.4,123.6 292.8,122.5 293.1,122.9 293.5,120.7 293.8,123.3 294.1,123.1 294.5,124.0 294.8,123.3 295.2,122.2 295.5,122.5 295.8,123.3 296.2,123.3 296.5,122.8 296.9,123.9 297.2,124.5 297.5,123.7 297.9,120.5 298.2,122.1 298.6,123.2 298.9,122.6 299.2,119.8 299.6,122.9 299.9,122.7 300.3,121.6 300.6,121.9 300.9,122.3 301.3,121.7 301.6,120.3 302.0,122.9 302.3,122.9 302.6,122.4 303.0,122.7 303.3,123.1 303.7,119.5 304.0,121.9 304.3,122.7 304.7,122.2 305.0,121.3 305.4,122.3 305.7,121.0 306.0,202.5 307.0,169.7 307.5,159.1 308.0,150.1 308.5,142.5 309.0,136.3 309.5,131.3 310.0,127.5 310.5,124.7 311.0,122.8 311.5,121.7 312.0,121.2 312.5,121.0 312.8,120.5 313.2,120.2 313.5,121.7 313.9,120.1 314.2,120.4 314.5,119.9 314.9,119.7 315.2,121.1 315.6,120.6 315.9,120.1 316.2,120.3 316.6,121.7 316.9,119.6 317.3,121.4 317.6,121.0 317.9,123.9 318.3,120.4 318.6,121.0 319.0,119.8 319.3,119.2 319.6,119.7 320.0,121.0 320.3,119.5 320.7,120.3 321.0,120.9 321.3,120.6 321.7,119.1 322.0,120.2 322.4,121.9 322.7,120.6 323.0,119.9 323.4,119.3 323.7,120.8 324.1,119.5 324.4,118.8 324.7,119.0 325.1,123.2 325.4,119.7 325.8,119.2 326.1,120.6 326.4,119.1 326.8,120.2 327.1,120.0 327.5,119.5 327.8,118.8 328.1,119.8 328.5,118.1 328.8,118.3 329.2,118.2 329.5,118.3 329.8,119.2 330.2,117.9 330.5,119.5 330.9,119.7 331.2,118.8 331.5,118.7 331.9,117.9 332.2,118.2 332.6,118.9 332.9,117.8 333.2,119.6 333.6,118.0 333.9,119.0 334.3,118.3 334.6,117.4 334.9,118.9 335.3,116.2 335.6,119.1 336.0,117.8 336.3,118.2 336.6,119.0 337.0,119.0 337.3,117.2 337.7,119.3 338.0,117.5 338.3,118.4 338.7,118.1 339.0,117.9 339.4,116.8 339.7,119.1 340.0,119.0 340.4,118.6 340.7,121.3 341.1,118.8 341.4,118.1 341.7,116.6 342.1,114.3 342.4,118.7 342.8,117.1 343.1,116.7 343.4,118.6 343.8,116.9 344.1,117.5 344.5,116.5 344.8,116.9 345.1,116.8 345.5,116.3 345.8,118.1 346.2,117.4 346.5,116.5 346.8,117.1 347.2,117.4 347.5,116.6 347.9,116.4 348.2,116.7 348.5,115.8 348.9,117.8 349.2,117.0 349.6,116.3 349.9,116.3 350.2,116.0 350.6,117.7 350.9,115.6 351.3,116.5 351.6,115.7 351.9,117.7 352.3,115.7 352.6,116.2 353.0,116.8 353.3,117.2 353.6,117.0 354.0,117.0 354.3,117.0 354.7,117.3 355.0,114.6 355.3,116.2 355.7,116.4 356.0,116.9 356.4,116.4 356.7,116.0 357.0,116.6 357.4,115.7 357.7,115.7 358.1,116.6 358.4,115.9 358.7,115.1 359.1,115.0 359.4,116.0 359.8,116.8 360.1,116.6 360.4,116.8 360.8,115.5 361.1,117.0 361.5,115.1 361.8,115.1 362.1,115.3 362.5,116.0 362.8,118.0 363.2,112.7 363.5,115.4 363.8,115.0 364.2,115.4 364.5,116.2 364.9,115.2 365.2,115.5 365.5,114.7 365.9,115.9 366.2,114.6 366.6,115.8 366.9,114.0 367.2,115.4 367.6,116.1 367.9,114.7 368.3,114.3 368.6,114.8 368.9,114.0 369.3,115.0 369.6,115.9 370.0,113.5 370.3,115.3 370.6,117.7 371.0,114.3 371.3,110.6 371.7,114.5 372.0,113.8 372.3,114.5 372.7,114.6 373.0,113.4 373.4,115.0 373.7,113.2 374.0,114.3 374.4,114.5 374.7,115.7 375.1,113.2 375.4,110.8 375.7,115.0 376.1,112.9 376.4,111.6 376.8,114.9 377.1,115.1 377.4,114.2 377.8,112.7 378.1,114.7 378.5,114.8 378.8,113.2 379.1,114.9 379.5,114.8 379.8,113.3 380.2,112.9 380.5,114.5 380.8,114.3 381.2,112.6 381.5,112.6 381.9,112.9 382.2,112.4 382.5,113.0 382.9,112.2 383.2,114.1 383.6,112.6 383.9,112.6 384.2,111.9 384.6,112.7 384.9,113.6 385.3,112.4 385.6,112.0 385.9,113.8 386.3,112.0 386.6,113.5 387.0,114.0 387.3,114.0 387.6,112.1 388.0,111.8 388.3,112.1 388.7,112.9 389.0,112.0 389.3,111.9 389.7,111.6 390.0,202.5 391.0,167.8 391.5,157.4 392.0,148.3 392.5,140.3 393.0,133.6 393.5,127.9 394.0,123.2 394.5,119.5 395.0,116.7 395.5,114.6 396.0,113.1 396.5,112.3 397.0,111.9 397.5,111.8 397.8,111.8 398.2,112.4 398.5,112.1 398.9,111.1 399.2,110.5 399.5,112.5 399.9,111.9 400.2,111.6 400.6,111.4 400.9,110.3 401.2,110.7 401.6,111.9 401.9,111.0 402.3,112.0 402.6,112.2 402.9,113.4 403.3,115.0 403.6,110.5 404.0,110.7 404.3,110.2 404.6,112.1 405.0,108.7 405.3,111.2 405.7,111.6 406.0,111.5 406.3,111.2 406.7,111.0 407.0,110.8 407.4,111.9 407.7,110.9 408.0,109.6 408.4,111.1 408.7,111.6 409.1,111.1 409.4,113.9 409.7,109.7 410.1,111.1 410.4,111.0 410.8,111.1 411.1,109.8 411.4,111.5 411.8,111.5 412.1,110.9 412.5,110.6 412.8,109.0 413.1,110.0 413.5,111.3 413.8,113.7 414.2,109.2 414.5,110.8 414.8,109.3 415.2,109.1 415.5,108.8 415.9,108.9 416.2,109.8 416.5,113.2 416.9,108.8 417.2,110.3 417.6,110.3 417.9,109.0 418.2,108.6 418.6,110.8 418.9,108.6 419.3,110.5 419.6,108.7 419.9,108.1 420.3,108.2 420.6,108.9 421.0,108.8 421.3,108.4 421.6,109.5 422.0,112.3 422.3,110.6 422.7,108.1 423.0,110.5 423.3,108.1 423.7,108.9 424.0,106.3 424.4,109.4 424.7,110.2 425.0,108.3 425.4,110.8 425.7,109.8 426.1,108.0 426.4,109.8 426.7,107.9 427.1,109.7 427.4,108.2 427.8,109.6 428.1,108.3 428.4,108.3 428.8,110.8 429.1,109.7 429.5,108.5 429.8,107.5 430.1,108.7 430.5,108.9 430.8,108.2 431.2,110.1 431.5,108.3 431.8,110.9 432.2,107.2 432.5,107.0 432.9,109.3 433.2,106.8 433.5,107.2 433.9,110.7 434.2,108.2 434.6,108.1 434.9,107.8 435.2,108.3 435.6,107.6 435.9,106.7 436.3,108.5 436.6,108.2 436.9,107.5 437.3,108.2 437.6,108.7 438.0,108.0 438.3,106.9 438.6,108.1 439.0,107.8 439.3,108.8 439.7,106.8 440.0,106.8 440.3,108.8 440.7,108.1 441.0,108.3 441.4,106.4 441.7,107.9 442.0,107.1 442.4,107.8 442.7,108.4 443.1,108.2 443.4,108.0 443.7,107.1 444.1,108.0 444.4,107.4 444.8,107.0 445.1,107.5 445.4,108.3 445.8,106.8 446.1,106.5 446.5,103.5 446.8,105.4 447.1,105.9 447.5,107.3 447.8,107.8 448.2,107.7 448.5,107.8 448.8,105.6 449.2,106.1 449.5,107.0 449.9,105.4 450.2,107.1 450.5,110.1 450.9,105.2 451.2,107.2 451.6,107.5 451.9,105.6 452.2,106.1 452.6,106.5 452.9,104.8 453.3,107.0 453.6,106.3 453.9,106.6 454.3,105.0 454.6,106.1 455.0,106.9 455.3,104.6 455.6,104.9 456.0,107.0 456.3,104.5 456.7,106.7 457.0,105.5 457.3,104.8 457.7,105.4 458.0,106.0 458.4,105.2 458.7,106.8 459.0,104.3 459.4,105.2 459.7,105.8 460.1,108.1 460.4,108.1 460.7,106.5 461.1,105.8 461.4,104.3 461.8,104.1 462.1,104.9 462.4,105.5 462.8,105.8 463.1,106.4 463.5,104.3 463.8,105.3 464.1,106.0 464.5,104.3 464.8,104.0 465.2,106.4 465.5,104.6 465.8,104.2 466.2,105.5 466.5,105.5 466.9,106.0 467.2,104.8 467.5,105.7 467.9,103.7 468.2,105.9 468.6,104.4 468.9,105.4 469.2,104.9 469.6,105.2 469.9,104.8 470.3,105.9 470.6,103.6 470.9,104.7 471.3,104.0 471.6,105.8 472.0,105.0 472.3,105.3 472.6,103.3 473.0,104.4 473.3,104.6 473.7,105.9 474.0,103.3 474.3,105.2 474.7,103.2 475.0,105.4 475.4,102.8 475.7,105.1 476.0,102.9 476.4,104.0 476.7,104.3 477.1,103.0 477.4,104.6 477.7,103.5 478.1,103.3 478.4,106.6 478.8,104.5 479.1,103.4 479.4,107.9 479.8,103.8 480.1,102.2 480.5,104.2 480.8,102.3 481.1,102.4 481.5,102.2 481.8,103.2 482.2,103.6 482.5,202.5 483.5,167.1 484.0,157.8 484.5,149.3 485.0,141.7 485.5,134.9 486.0,128.9 486.5,123.6 487.0,119.0 487.5,115.1 488.0,111.9 488.5,109.2 489.0,107.0 489.5,105.3 490.0,104.1 490.5,103.3 491.0,102.8 491.5,102.5 492.0,102.4 492.3,102.9 492.7,101.9 493.0,101.6 493.4,103.1 493.7,101.7 494.0,103.7 494.4,101.5 494.7,103.5 495.1,100.7 495.4,102.6 495.7,101.7 496.1,101.2 496.4,97.5 496.8,100.8 497.1,101.1 497.4,101.2 497.8,102.6 498.1,103.0 498.5,102.7 498.8,101.4 499.1,101.6 499.5,100.9 499.8,102.9 500.2,100.8 500.5,100.2 500.8,100.1 501.2,102.9 501.5,101.1 501.9,101.1 502.2,101.1 502.5,99.3 502.9,100.7 503.2,100.6 503.6,102.2 503.9,100.7 504.2,100.4 504.6,100.2 504.9,102.4 505.3,102.0 505.6,100.5 505.9,101.1 506.3,100.1 506.6,101.4 507.0,101.3 507.3,100.1 507.6,100.6 508.0,102.1 508.3,102.1 508.7,97.0 509.0,99.8 509.3,99.7 509.7,100.8 510.0,101.6 510.4,100.4 510.7,101.1 511.0,100.4 511.4,101.9 511.7,99.7 512.1,99.1 512.4,100.8 512.7,101.1 513.1,99.1 513.4,99.1 513.8,101.9 514.1,97.1 514.4,100.9 514.8,101.1 515.1,99.1 515.5,100.3 515.8,99.8 516.1,101.7 516.5,100.9 516.8,99.1 517.2,95.4 517.5,99.8 517.8,96.3 518.2,100.5 518.5,100.1 518.9,101.5 519.2,100.6 519.5,99.3 519.9,101.4 520.2,99.5 520.6,98.7 520.9,98.2 521.2,101.1 521.6,100.1 521.9,98.9 522.3,98.4 522.6,100.5 522.9,98.2 523.3,99.0 523.6,99.7 524.0,104.4 524.3,99.5 524.6,101.0 525.0,99.8 525.3,99.0 525.7,99.0 526.0,99.7 526.3,98.7 526.7,99.4 527.0,99.6 527.4,100.5" fill="none" stroke="#00cc00" stroke-width="1" stroke-linejoin="round"/></g>
<rect x="61" y="222" width="470" height="134" fill="#000"/>
<rect x="62" y="223" width="1" height="132" fill="#0000ff"/>
<rect x="73" y="223" width="1" height="132" fill="#0000b4"/>
<rect x="85" y="223" width="1" height="132" fill="#0000b4"/>
<rect x="97" y="223" width="1" height="132" fill="#0000b4"/>
<rect x="108" y="223" width="1" height="132" fill="#0000b4"/>
<rect x="120" y="223" width="1" height="132" fill="#0000ff"/>
<rect x="132" y="223" width="1" height="132" fill="#0000b4"/>
<rect x="143" y="223" width="1" height="132" fill="#0000b4"/>
<rect x="155" y="223" width="1" height="132" fill="#0000b4"/>
<rect x="167" y="223" width="1" height="132" fill="#0000b4"/>
<rect x="178" y="223" width="1" height="132" fill="#0000ff"/>
<rect x="190" y="223" width="1" height="132" fill="#0000b4"/>
<rect x="202" y="223" width="1" height="132" fill="#0000b4"/>
<rect x="213" y="223" width="1" height="132" fill="#0000b4"/>
<rect x="225" y="223" width="1" height="132" fill="#0000b4"/>
<rect x="237" y="223" width="1" height="132" fill="#0000ff"/>
<rect x="248" y="223" width="1" height="132" fill="#0000b4"/>
<rect x="260" y="223" width="1" height="132" fill="#0000b4"/>
<rect x="272" y="223" width="1" height="132" fill="#0000b4"/>
<rect x="283" y="223" width="1" height="132" fill="#0000b4"/>
<rect x="295" y="223" width="1" height="132" fill="#0000ff"/>
<rect x="307" y="223" width="1" height="132" fill="#0000b4"/>
<rect x="318" y="223" width="1" height="132" fill="#0000b4"/>
<rect x="330" y="223" width="1" height="132" fill="#0000b4"/>
<rect x="342" y="223" width="1" height="132" fill="#0000b4"/>
<rect x="353" y="223" width="1" height="132" fill="#0000ff"/>
<rect x="365" y="223" width="1" height="132" fill="#0000b4"/>
<rect x="377" y="223" width="1" height="132" fill="#0000b4"/>
<rect x="388" y="223" width="1" height="132" fill="#0000b4"/>
<rect x="400" y="223" width="1" height="132" fill="#0000b4"/>
<rect x="412" y="223" width="1" height="132" fill="#0000ff"/>
<rect x="423" y="223" width="1" height="132" fill="#0000b4"/>
<rect x="435" y="223" width="1" height="132" fill="#0000b4"/>
<rect x="447" y="223" width="1" height="132" fill="#0000b4"/>
<rect x="458" y="223" width="1" height="132" fill="#0000b4"/>
<rect x="470" y="223" width="1" height="132" fill="#0000ff"/>
<rect x="482" y="223" width="1" height="132" fill="#0000b4"/>
<rect x="493" y="223" width="1" height="132" fill="#0000b4"/>
<rect x="505" y="223" width="1" height="132" fill="#0000b4"/>
<rect x="517" y="223" width="1" height="132" fill="#0000b4"/>
<rect x="59" y="354" width="470" height="1" fill="#0000ff"/>
<rect x="60" y="341" width="469" height="1" fill="#0000c0"/>
<rect x="59" y="328" width="470" height="1" fill="#0000ff"/>
<rect x="60" y="315" width="469" height="1" fill="#0000c0"/>
<rect x="59" y="302" width="470" height="1" fill="#0000ff"/>
<rect x="60" y="289" width="469" height="1" fill="#0000c0"/>
<rect x="59" y="276" width="470" height="1" fill="#0000ff"/>
<rect x="60" y="263" width="469" height="1" fill="#0000c0"/>
<rect x="59" y="250" width="470" height="1" fill="#0000ff"/>
<rect x="60" y="237" width="469" height="1" fill="#0000c0"/>
<rect x="59" y="223" width="470" height="1" fill="#0000ff"/>
<rect x="528" y="223" width="1" height="132" fill="#c8c8c8"/>
<rect x="529" y="354" width="5" height="1" fill="#0000ff"/>
<rect x="529" y="348" width="2" height="1" fill="#0000e0"/>
<rect x="529" y="341" width="2" height="1" fill="#0000e0"/>
<rect x="529" y="335" width="2" height="1" fill="#0000e0"/>
<rect x="529" y="328" width="5" height="1" fill="#0000ff"/>
<rect x="529" y="322" width="2" height="1" fill="#0000e0"/>
<rect x="529" y="315" width="2" height="1" fill="#0000e0"/>
<rect x="529" y="309" width="2" height="1" fill="#0000e0"/>
<rect x="529" y="302" width="5" height="1" fill="#0000ff"/>
<rect x="529" y="296" width="2" height="1" fill="#0000e0"/>
<rect x="529" y="289" width="2" height="1" fill="#0000e0"/>
<rect x="529" y="282" width="2" height="1" fill="#0000e0"/>
<rect x="529" y="276" width="5" height="1" fill="#0000ff"/>
<rect x="529" y="269" width="2" height="1" fill="#0000e0"/>
<rect x="529" y="263" width="2" height="1" fill="#0000e0"/>
<rect x="529" y="256" width="2" height="1" fill="#0000e0"/>
<rect x="529" y="250" width="5" height="1" fill="#0000ff"/>
<rect x="529" y="243" width="2" height="1" fill="#0000e0"/>
<rect x="529" y="237" width="2" height="1" fill="#0000e0"/>
<rect x="529" y="230" width="2" height="1" fill="#0000e0"/>
<rect x="529" y="223" width="5" height="1" fill="#0000ff"/>
<g shape-rendering="crispEdges"><polyline points="62.5,354.0 62.5,268.0 63.9,286.8 64.7,294.3 65.4,295.5 66.0,295.7 66.7,296.3 67.4,296.4 68.0,297.6 68.7,297.7 69.3,300.3 69.9,300.2 70.5,301.0 72.2,298.1 72.9,298.6 73.6,299.0 74.2,300.0 74.9,299.2 75.6,300.2 76.3,298.5 77.0,298.9 77.6,297.1 78.3,296.6 79.0,296.0 79.7,294.3 80.3,294.7 80.9,294.1 81.5,291.8 82.1,292.0 82.7,291.8 83.4,294.7 84.1,296.9 84.8,298.5 85.4,298.1 86.1,298.5 86.8,299.1 87.4,299.2 88.1,300.5 88.8,300.3 89.4,301.4 90.1,300.8 90.8,300.8 91.4,301.0 92.1,299.7 92.8,300.0 93.5,301.0 94.2,300.0 94.9,299.1 95.6,298.8 96.3,299.0 97.0,299.9 97.6,300.0 98.3,298.8 99.0,299.8 99.7,298.5 100.4,296.2 101.1,294.8 101.8,295.5 102.5,295.6 103.2,296.8 103.8,296.8 104.5,297.0 105.2,297.3 105.8,296.8 106.5,298.1 107.2,296.5 107.8,296.4 108.5,294.4 109.2,293.7 109.8,293.5 110.5,293.1 111.2,291.3 111.8,290.6 112.5,289.5 113.2,289.3 113.8,291.1 114.4,290.5 115.1,292.7 115.7,293.5 116.4,293.2 117.0,290.8 117.7,290.3 118.4,290.1 119.0,288.4 119.7,289.3 120.3,289.4 120.9,289.3 121.5,291.0 122.2,292.3 122.8,293.6 123.4,295.8 124.1,296.8 124.7,296.6 125.3,297.0 125.9,297.8 126.6,297.6 127.2,297.6 127.8,295.9 128.4,295.3 129.1,294.8 129.7,295.9 130.3,297.6 131.0,296.9 131.6,298.5 132.2,299.8 132.9,299.6 133.6,299.2 134.3,300.2 134.9,300.2 135.6,299.1 136.3,297.9 136.9,298.7 137.6,297.2 138.3,296.8 139.9,290.1 140.6,289.7 141.3,289.1 141.9,289.5 142.6,288.7 143.3,287.6 145.0,292.6 145.6,292.2 146.2,294.1 146.8,294.4 147.5,295.1 148.2,295.0 148.9,295.8 149.6,294.8 150.3,294.9 150.9,295.7 151.6,294.8 152.3,294.5 152.9,294.5 153.5,294.4 154.2,294.3 154.8,294.2 155.5,293.1 156.2,292.5 156.8,291.0 157.5,290.5 158.1,290.5 158.8,293.0 159.4,293.8 160.0,294.8 160.7,295.6 161.4,295.8 162.1,294.5 162.8,295.0 163.5,294.8 164.2,296.0 164.9,296.7 165.6,295.1 166.3,295.1 167.0,296.5 167.7,296.1 168.4,296.0 170.0,298.1 170.7,296.4 171.4,297.0 172.0,296.3 172.7,295.0 173.4,294.3 174.0,293.7 174.6,295.6 175.3,295.4 175.9,296.0 176.7,280.9 177.6,291.0 178.5,295.1 179.2,295.0 179.9,295.7 180.6,295.0 181.3,294.8 182.0,293.0 182.7,293.5 183.4,292.4 184.0,292.2 184.7,290.4 185.4,291.9 186.0,290.1 186.7,288.8 187.4,287.9 188.0,287.2 188.7,286.2 189.4,285.9 190.0,288.0 190.6,288.6 191.3,289.7 191.9,291.0 193.6,289.3 194.2,290.2 194.9,290.5 195.6,292.2 196.2,294.5 196.9,294.8 197.5,295.3 198.2,295.3 198.8,293.9 199.4,294.3 200.0,291.6 200.7,289.1 201.3,288.1 201.9,285.9 202.5,286.7 203.2,287.9 203.8,289.0 204.4,290.1 206.1,286.8 206.7,288.0 207.4,288.6 208.0,290.6 208.6,291.0 210.3,295.1 211.0,293.8 211.7,294.7 212.4,293.2 213.1,291.4 213.8,291.2 214.5,291.0 215.1,291.4 215.7,291.6 216.3,292.4 217.0,292.6 217.6,291.2 218.2,290.0 218.9,290.1 219.5,288.4 220.1,286.7 220.7,286.4 221.4,285.3 222.0,283.4 223.7,287.6 224.3,288.0 224.9,287.9 225.5,289.2 226.2,288.4 226.8,289.7 227.5,292.1 228.2,292.6 228.9,290.0 229.6,289.1 230.3,287.6 231.0,288.8 231.6,288.3 232.2,290.9 232.9,291.0 234.5,285.9 235.2,285.8 235.8,287.8 236.4,287.7 237.0,289.3 237.9,275.1 239.5,289.3 240.2,290.6 240.8,290.3 241.4,291.2 242.1,291.0 242.7,290.3 243.3,290.1 243.9,289.5 244.6,288.4 245.2,288.8 245.8,289.5 246.4,291.7 247.1,291.8 247.7,290.0 248.4,290.7 249.1,288.1 249.7,286.9 250.4,286.8 251.0,287.3 251.7,290.3 252.3,292.2 252.9,292.6 254.6,293.8 255.3,290.8 256.0,288.5 256.7,284.9 257.4,282.6 258.2,285.2 258.9,286.3 259.6,287.6 260.3,287.4 260.9,287.6 261.6,289.5 262.3,288.6 263.0,290.1 263.6,291.4 264.3,290.7 265.0,291.0 265.6,292.3 266.3,292.6 266.9,291.6 267.6,291.5 268.2,290.0 268.8,290.1 269.4,291.9 270.1,291.6 270.7,293.6 271.3,293.8 271.9,291.1 272.6,290.5 273.2,289.0 273.8,285.9 274.5,285.9 275.1,285.3 275.7,286.3 276.3,286.8 277.0,288.1 277.6,288.3 278.2,290.0 278.8,291.0 279.5,289.6 280.1,290.0 280.7,290.2 281.4,289.3 282.0,288.6 282.7,288.7 283.4,286.9 284.0,288.0 284.7,286.8 285.3,285.5 285.9,286.9 286.6,286.6 287.2,285.1 287.9,286.4 288.6,285.8 289.3,285.6 290.0,286.1 290.7,287.3 291.4,287.1 292.0,287.2 292.6,288.3 293.3,286.6 293.9,287.6 294.0,287.6 294.6,286.5 295.3,286.3 295.9,284.7 296.5,283.4 298.2,288.4 298.8,289.5 299.4,289.4 300.1,290.4 300.7,292.1 301.3,290.3 301.9,290.3 302.6,288.9 303.2,286.8 303.9,285.1 304.6,285.5 305.4,283.4 306.7,301.0 307.5,297.7 308.3,296.7 309.1,294.3 309.7,294.3 310.3,291.9 310.9,292.1 311.6,290.1 312.3,291.9 313.0,291.9 313.7,294.3 314.4,292.0 315.2,290.3 315.9,287.8 316.6,286.4 317.2,288.1 317.8,288.0 318.5,290.5 319.1,291.0 319.7,289.7 320.3,288.3 321.0,288.6 321.6,287.6 322.3,286.6 322.9,287.4 323.6,287.7 324.3,287.2 324.9,286.8 325.6,287.1 326.2,286.6 326.8,288.1 327.4,288.4 328.1,287.1 328.8,287.9 329.5,286.4 330.2,286.9 330.9,286.0 331.6,285.9 332.3,286.7 333.0,288.3 333.6,288.2 334.3,289.2 335.0,291.0 335.6,291.0 336.3,288.8 337.0,289.0 337.6,288.2 338.3,286.4 339.0,286.8 339.7,286.5 340.3,286.7 341.0,288.9 341.7,288.4 342.3,288.4 343.0,290.1 343.7,291.0 344.3,290.9 345.0,292.6 345.6,292.0 346.3,290.8 346.9,291.1 347.5,290.5 348.2,290.8 348.8,290.8 349.5,290.8 350.2,291.6 350.9,292.1 351.5,290.1 352.1,288.6 352.7,287.5 353.4,286.8 354.0,285.9 354.7,283.4 355.4,282.6 356.0,279.0 356.7,278.4 357.3,280.4 358.0,280.5 358.6,282.2 359.2,282.6 359.9,280.7 360.7,278.9 361.4,276.4 362.1,277.3 362.7,280.0 363.4,280.9 364.0,280.4 364.7,280.8 365.3,280.5 365.9,281.8 366.5,282.3 367.2,283.3 367.8,283.6 368.4,284.8 370.1,280.1 370.7,281.7 371.3,280.7 372.0,282.5 372.6,283.1 373.2,282.2 373.8,282.6 374.5,282.7 375.1,281.8 375.8,283.1 376.4,282.5 377.1,283.7 377.8,285.3 378.4,285.9 379.1,285.8 379.8,282.6 380.5,282.7 381.1,281.7 381.8,280.1 382.4,282.2 383.0,282.7 383.7,285.2 384.3,285.9 384.9,284.3 385.6,283.8 386.2,280.2 386.8,279.7 387.4,281.0 388.1,280.1 388.7,280.4 389.3,280.9 390.5,268.4 390.5,354.0 390.5,268.7 391.8,275.9 392.5,274.2 393.1,273.7 393.7,273.9 394.3,272.6 395.0,274.6 395.6,275.1 396.2,277.2 396.8,279.2 397.5,279.5 398.1,280.7 398.7,281.8 399.4,283.4 400.0,282.2 400.6,282.8 401.2,282.0 401.9,280.1 402.5,282.0 403.1,282.5 403.7,283.8 404.4,285.1 405.0,284.8 405.6,284.2 406.2,282.9 406.9,281.4 407.5,281.8 408.2,280.9 408.9,281.9 409.6,282.4 410.2,281.8 410.9,281.3 411.7,278.6 412.4,278.4 412.8,281.4 413.5,282.2 414.1,281.7 414.7,281.6 415.3,282.6 416.0,282.9 416.7,281.6 417.4,281.1 418.0,279.1 418.7,279.2 419.3,281.9 419.9,284.0 420.6,285.8 421.2,286.8 421.8,286.9 422.5,286.7 423.1,286.2 423.7,285.1 424.4,284.0 425.0,282.3 425.7,281.8 426.4,280.4 427.1,278.4 427.7,280.1 428.3,279.6 428.9,281.9 429.6,281.8 430.2,282.9 430.8,284.8 431.4,284.0 432.1,285.9 432.7,286.0 433.4,284.6 434.1,282.4 434.7,282.7 435.4,280.9 436.0,280.9 436.7,281.3 437.3,282.5 437.9,283.1 438.6,281.8 439.3,281.7 439.9,282.0 440.6,280.8 441.3,279.7 441.9,280.3 442.5,279.7 443.1,280.6 443.8,280.1 444.4,281.2 445.1,281.5 445.8,282.6 446.4,282.8 447.1,282.6 447.8,281.8 448.5,280.5 449.1,281.2 449.8,281.1 450.5,279.7 451.1,279.8 451.7,280.8 452.3,281.7 453.0,281.4 453.6,281.8 454.3,279.8 455.0,280.6 455.6,279.3 456.3,280.1 457.0,278.6 457.7,279.4 458.3,277.9 459.0,277.6 459.7,276.7 460.3,277.7 460.9,278.5 461.5,279.2 462.2,280.9 462.8,280.4 463.5,281.3 464.2,280.7 464.8,279.8 465.5,280.1 466.1,279.8 466.8,280.8 467.4,282.4 468.0,282.6 469.7,279.2 470.3,280.2 470.9,281.9 471.6,283.3 472.2,283.8 472.9,282.2 473.5,282.7 474.2,280.5 474.9,281.5 475.5,280.1 476.2,278.6 476.8,277.9 477.4,278.6 478.1,276.7 478.7,277.5 479.3,278.2 479.9,280.7 480.6,280.9 481.2,281.3 481.8,282.0 482.4,281.1 483.1,281.4 483.7,280.1 484.4,279.9 485.1,277.6 485.7,277.4 486.4,275.1 488.1,280.9 488.8,280.4 489.4,282.0 490.1,280.7 490.8,281.6 491.4,281.8 492.1,280.2 492.8,280.0 493.4,281.2 494.1,279.6 494.8,279.2 495.4,279.5 496.0,277.9 496.7,277.7 497.3,277.6 499.0,282.6 499.6,281.5 500.2,282.3 500.8,282.8 501.5,281.8 502.2,281.0 502.9,279.8 503.6,279.2 504.3,281.6 505.0,282.9 505.6,283.4 506.3,283.1 507.0,281.2 507.7,281.7 508.3,280.6 509.0,280.1 509.7,281.3 510.3,280.1 511.0,280.9 511.7,281.0 512.3,280.9 513.0,281.0 513.7,281.6 514.3,282.3 515.0,283.2 515.7,282.6 516.3,282.9 517.0,283.0 517.7,284.6 518.4,283.0 519.0,284.3 519.7,284.2 520.3,283.0 520.9,281.9 521.5,280.9 522.2,281.2 522.8,282.3 523.4,283.0 524.0,282.6 524.6,282.9 525.2,282.7 525.8,280.9 526.4,281.3 527.1,281.4" fill="none" stroke="#ff00ff" stroke-width="1" stroke-linejoin="round"/></g>
</svg>
<div class="t" style="left:230px;top:56.5px;width:300px;text-align:right;font-size:12px;letter-spacing:-0.25px;white-space:pre">recorded with PIONEER DVD-RW  DVR-108  v1.18</div>
<div class="ax axr" style="left:25.0px;top:67.3px">20</div>
<div class="ax axr" style="left:25.0px;top:94.3px">16</div>
<div class="ax axr" style="left:25.0px;top:120.3px">12</div>
<div class="ax axr" style="left:25.0px;top:146.3px">8</div>
<div class="ax axr" style="left:25.0px;top:172.3px">4</div>
<div class="ax axr" style="left:25.0px;top:217.3px">10</div>
<div class="ax axr" style="left:25.0px;top:244.3px">8</div>
<div class="ax axr" style="left:25.0px;top:270.3px">6</div>
<div class="ax axr" style="left:25.0px;top:296.3px">4</div>
<div class="ax axr" style="left:25.0px;top:322.3px">2</div>
<div class="ax" style="left:53.0px;top:206.6px;width:30px;text-align:center">0</div>
<div class="ax" style="left:53.0px;top:356.5px;width:30px;text-align:center">0</div>
<div class="ax" style="left:109.3px;top:206.6px;width:30px;text-align:center">10</div>
<div class="ax" style="left:109.3px;top:356.5px;width:30px;text-align:center">10</div>
<div class="ax" style="left:167.7px;top:206.6px;width:30px;text-align:center">20</div>
<div class="ax" style="left:167.7px;top:356.5px;width:30px;text-align:center">20</div>
<div class="ax" style="left:226.0px;top:206.6px;width:30px;text-align:center">30</div>
<div class="ax" style="left:226.0px;top:356.5px;width:30px;text-align:center">30</div>
<div class="ax" style="left:284.4px;top:206.6px;width:30px;text-align:center">40</div>
<div class="ax" style="left:284.4px;top:356.5px;width:30px;text-align:center">40</div>
<div class="ax" style="left:342.8px;top:206.6px;width:30px;text-align:center">50</div>
<div class="ax" style="left:342.8px;top:356.5px;width:30px;text-align:center">50</div>
<div class="ax" style="left:401.1px;top:206.6px;width:30px;text-align:center">60</div>
<div class="ax" style="left:401.1px;top:356.5px;width:30px;text-align:center">60</div>
<div class="ax" style="left:459.5px;top:206.6px;width:30px;text-align:center">70</div>
<div class="ax" style="left:459.5px;top:356.5px;width:30px;text-align:center">70</div>
<div class="ax" style="left:517.9px;top:206.6px;width:30px;text-align:center">80</div>
<div class="ax" style="left:517.9px;top:356.5px;width:30px;text-align:center">80</div>
<div class="ax axr" style="left:515.0px;top:78.3px">48</div>
<div class="ax axr" style="left:515.0px;top:98.3px">40</div>
<div class="ax axr" style="left:515.0px;top:118.3px">32</div>
<div class="ax axr" style="left:515.0px;top:138.3px">24</div>
<div class="ax axr" style="left:515.0px;top:158.3px">16</div>
<div class="ax axr" style="left:515.0px;top:178.3px">8</div>
<div class="ax axr" style="left:515.0px;top:216.9px">20</div>
<div class="ax axr" style="left:515.0px;top:243.9px">16</div>
<div class="ax axr" style="left:515.0px;top:269.9px">12</div>
<div class="ax axr" style="left:515.0px;top:295.9px">8</div>
<div class="ax axr" style="left:515.0px;top:321.9px">4</div>
<div class="btn" style="left:562px;top:59px;width:68px;height:19px;letter-spacing:-0.6px;text-indent:-2px">開始</div>
<div class="btn" style="left:654px;top:59px;width:68px;height:19px;border-color:#2b4a94;box-shadow:inset 0 0 0 1px #bcc6e6;letter-spacing:-0.4px;text-indent:-3px;line-height:16px">終了(<span style="position:static;text-decoration:underline">X</span>)<div style="left:2px;top:1px;width:63px;height:15px;border:1px dotted #000"></div></div>
<div class="grp" style="left:561px;top:89px;width:162px;height:67px"></div>
<div class="t leg cj" style="left:567px;top:81px;letter-spacing:0px;background:#f8f8f8;padding-right:1pxletter-spacing:-1px;"><span style="position:static;letter-spacing:-2.3px">ディスク</span>情報</div>
<div class="t cj" style="left:569px;top:94px;letter-spacing:0px;"><span style="position:static;letter-spacing:-5.15px">タイ</span>プ:</div>
<div class="t nv" style="left:617px;top:94px;letter-spacing:-0.29px;">Data CD</div>
<div class="t" style="left:569px;top:108.5px;letter-spacing:-1.02px;">ID:</div>
<div class="t nv" style="left:617px;top:108.5px;letter-spacing:-0.19px;">Taiyo Yuden</div>
<div class="t cj" style="left:569px;top:123.5px;letter-spacing:-0.54px;">日<span style="position:static;letter-spacing:0">付:</span></div>
<div class="t nv" style="left:617px;top:123.5px;letter-spacing:-0.1px;">2 April 2005</div>
<div class="t" style="left:569px;top:138.5px;letter-spacing:-0.68px;">Label:</div>
<div class="t nv" style="left:617px;top:138.5px;letter-spacing:-1.1px;">CDS_TEST_A2</div>
<div class="grp" style="left:561px;top:161px;width:162px;height:178px"></div>
<div class="t leg" style="left:567px;top:154px;letter-spacing:-0.12px;background:#f7f7f6;">Settings</div>
<div class="t cj" style="left:569px;top:172px;letter-spacing:0.02px;">転送速度</div>
<div class="t cj" style="left:569px;top:197px;letter-spacing:-0.95px;">開始</div>
<div class="t cj" style="left:569px;top:219.5px;letter-spacing:0.02px;">終了位置</div>
<div style="left:631px;top:170px;width:82px;height:20px;border:1px solid #7f9db9;background:#fff"></div>
<div class="t cj" style="left:634.5px;top:173px;letter-spacing:0.8px;">最大</div>
<div style="left:695px;top:172px;width:16px;height:16px;border:1px solid #b6bace;border-radius:2px;background:linear-gradient(#f4f4fa,#d8d8e8 70%,#b8b8cc)"><svg width="14" height="14" viewBox="0 0 14 14" style="left:0;top:0"><path d="M3.2 4.8 L7 8.6 L10.8 4.8" fill="none" stroke="#20243c" stroke-width="2.1"/></svg></div>
<div class="edit" style="left:631px;top:194px;width:70px;height:18px"></div>
<div class="edit" style="left:631px;top:217px;width:70px;height:18px"></div>
<div class="t" style="left:633.5px;top:196px;letter-spacing:-0.88px;">00:00.00</div>
<div class="t" style="left:634px;top:219px;letter-spacing:-0.99px;">79:57.70</div>
<div class="cb" style="left:569px;top:242px"></div>
<div class="t" style="left:584.5px;top:241.5px;letter-spacing:-0.34px;">Quick Scan</div>
<div class="cb" style="left:569px;top:261px"><svg width="11" height="11" viewBox="0 0 11 11" style="left:0;top:0"><path d="M2 4.6 L4.4 7 L8.8 2.6" fill="none" stroke="#1fb81f" stroke-width="2.2"/></svg></div>
<div class="t" style="left:584.5px;top:260.5px;letter-spacing:-0.31px;">Show C1/PIE</div>
<div class="cb" style="left:569px;top:276px"><svg width="11" height="11" viewBox="0 0 11 11" style="left:0;top:0"><path d="M2 4.6 L4.4 7 L8.8 2.6" fill="none" stroke="#1fb81f" stroke-width="2.2"/></svg></div>
<div class="t" style="left:584.5px;top:275.5px;letter-spacing:-0.32px;">Show C2/PIF</div>
<div class="cb" style="left:569px;top:291px"><svg width="11" height="11" viewBox="0 0 11 11" style="left:0;top:0"><path d="M2 4.6 L4.4 7 L8.8 2.6" fill="none" stroke="#1fb81f" stroke-width="2.2"/></svg></div>
<div class="t" style="left:584.5px;top:290.5px;letter-spacing:-0.01px;">Show Jitter</div>
<div class="cb" style="left:569px;top:306px"><svg width="11" height="11" viewBox="0 0 11 11" style="left:0;top:0"><path d="M2 4.6 L4.4 7 L8.8 2.6" fill="none" stroke="#1fb81f" stroke-width="2.2"/></svg></div>
<div class="t" style="left:584.5px;top:305.5px;letter-spacing:-0.57px;">Show Read Speed</div>
<div class="cb" style="left:569px;top:321px"><svg width="11" height="11" viewBox="0 0 11 11" style="left:0;top:0"><path d="M2 4.6 L4.4 7 L8.8 2.6" fill="none" stroke="#1fb81f" stroke-width="2.2"/></svg></div>
<div class="t" style="left:584.5px;top:320.5px;letter-spacing:-0.47px;">Show Write Speed</div>
<div class="grp" style="left:561px;top:344px;width:162px;height:24px"></div>
<div class="t cj" style="left:569px;top:349px;letter-spacing:0px;letter-spacing:-1px;">品質<span style="position:static;letter-spacing:-4.52px">スコ</span>ア:</div>
<div class="t val" style="left:587px;top:349px;width:119.19px;text-align:right;letter-spacing:-0.81px;">97</div>
<div class="grp" style="left:561px;top:374px;width:162px;height:63px"></div>
<div class="t cj" style="left:569px;top:381px;letter-spacing:-0.51px;">進行状<span style="position:static;letter-spacing:0">況:</span></div>
<div class="t val" style="left:588.2px;top:381px;width:119.00px;text-align:right;letter-spacing:-1.0px;">100 %</div>
<div class="t cj" style="left:569px;top:400px;letter-spacing:0px;"><span style="position:static;letter-spacing:-4.01px">ポジショ</span>ン:</div>
<div class="t val" style="left:587.0px;top:400px;width:119.05px;text-align:right;letter-spacing:-0.95px;">79:55.00</div>
<div class="t cj" style="left:569px;top:417.5px;letter-spacing:-1.04px;">速<span style="position:static;letter-spacing:0">度:</span></div>
<div class="t val" style="left:588.5px;top:417.5px;width:119.57px;text-align:right;letter-spacing:-0.43px;">41.73 X</div>
<div class="sgrp" style="left:18px;top:374px;width:170px;height:63px"></div>
<div style="left:26px;top:369px;width:15.5px;height:11px;background:#f3f3f0"></div>
<div style="left:28px;top:371px;width:8px;height:8px;background:#00ffff;border:1px solid #303040"></div>
<div class="t cj" style="left:39.0px;top:367.5px;background:#f3f3f0;padding-right:1px;letter-spacing:-1.2px">CD<span style="position:static;letter-spacing:-2.8px">エラ</span>ー</div>
<div class="t cj" style="left:26.5px;top:381.5px;letter-spacing:-0.54px;">平<span style="position:static;letter-spacing:0">均:</span></div>
<div class="t val" style="left:55.5px;top:381.5px;width:118.75px;text-align:right;letter-spacing:-1.25px;">0.81</div>
<div class="t cj" style="left:26.5px;top:400px;letter-spacing:-0.54px;">最<span style="position:static;letter-spacing:0">大:</span></div>
<div class="t val" style="left:55.5px;top:400px;width:118.74px;text-align:right;letter-spacing:-1.26px;">17</div>
<div class="t cj" style="left:26.5px;top:417.5px;letter-spacing:-0.07px;">合<span style="position:static;letter-spacing:0">計 :</span></div>
<div class="t val" style="left:55.5px;top:417.5px;width:119.47px;text-align:right;letter-spacing:-0.53px;">3888</div>
<div class="sgrp" style="left:198px;top:374px;width:170px;height:63px"></div>
<div style="left:206px;top:369px;width:16px;height:11px;background:#f3f3f0"></div>
<div style="left:208px;top:371px;width:8px;height:8px;background:#ffb62a;border:1px solid #303040"></div>
<div class="t cj" style="left:219.5px;top:367.5px;background:#f3f3f0;padding-right:1px;letter-spacing:-1.6px">C2<span style="position:static;letter-spacing:-2.8px">エラ</span>ー</div>
<div class="t cj" style="left:208.2px;top:381.5px;letter-spacing:-0.54px;">平<span style="position:static;letter-spacing:0">均:</span></div>
<div class="t val" style="left:237.5px;top:381.5px;width:118.91px;text-align:right;letter-spacing:-1.09px;">0.00</div>
<div class="t cj" style="left:208.2px;top:400px;letter-spacing:-0.54px;">最<span style="position:static;letter-spacing:0">大:</span></div>
<div class="t val" style="left:237.5px;top:400px;width:120.00px;text-align:right;letter-spacing:0px;">0</div>
<div class="t cj" style="left:208.2px;top:417.5px;letter-spacing:-0.07px;">合<span style="position:static;letter-spacing:0">計 :</span></div>
<div class="t val" style="left:237.5px;top:417.5px;width:120.00px;text-align:right;letter-spacing:0px;">0</div>
<div class="sgrp" style="left:379px;top:374px;width:170px;height:47px"></div>
<div style="left:388px;top:369px;width:16px;height:11px;background:#f3f3f0"></div>
<div style="left:390px;top:371px;width:8px;height:8px;background:#ff00ff;border:1px solid #303040"></div>
<div class="t" style="left:401.5px;top:367.5px;letter-spacing:0.08px;background:#f3f3f0;padding-right:2px">Jitter</div>
<div class="t cj" style="left:388.5px;top:382px;letter-spacing:-0.54px;">平<span style="position:static;letter-spacing:0">均:</span></div>
<div class="t val" style="left:419px;top:382px;width:118.85px;text-align:right;letter-spacing:-1.15px;">9.96 %</div>
<div class="t cj" style="left:388.5px;top:400.3px;letter-spacing:-0.54px;">最<span style="position:static;letter-spacing:0">大:</span></div>
<div class="t val" style="left:419px;top:400.3px;width:118.85px;text-align:right;letter-spacing:-1.15px;">13.0 %</div>
</div>
</body>
</html>
